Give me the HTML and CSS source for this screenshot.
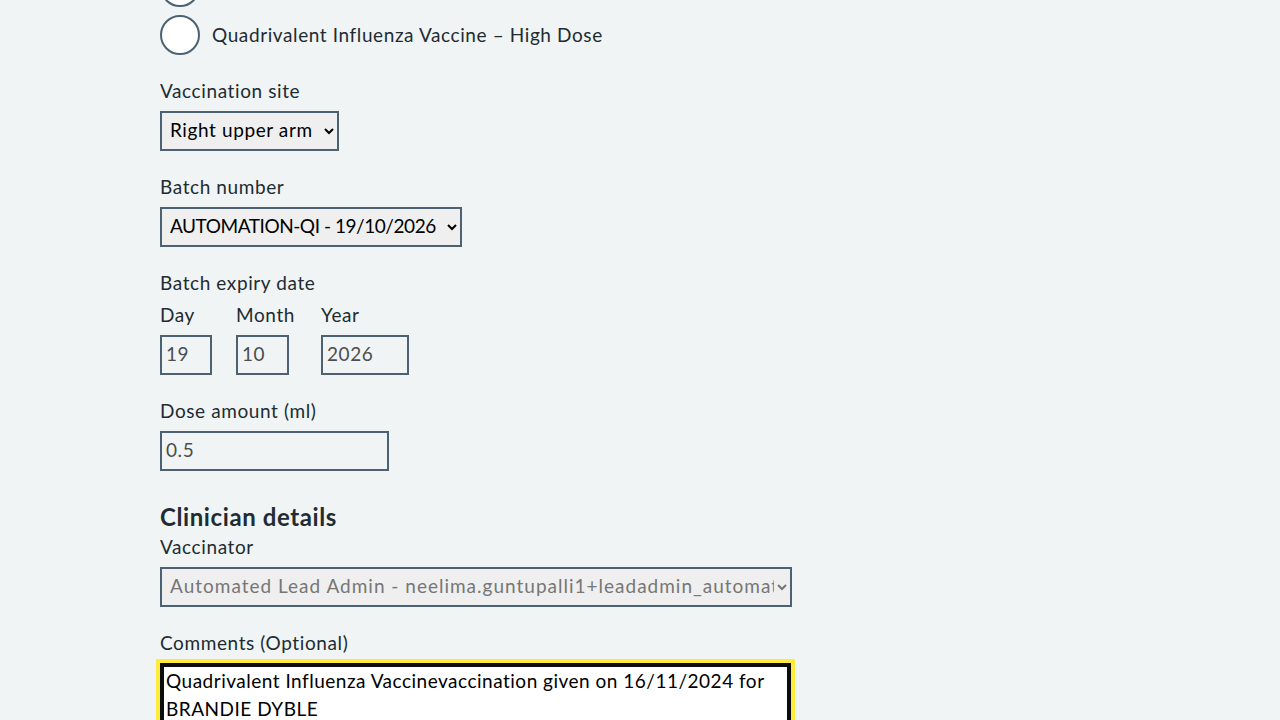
FILE: index.html
```html
<!DOCTYPE html>
<html lang="en">
<head>
<meta charset="utf-8">
<title>Record vaccination</title>
<link rel="stylesheet" href="styles.css">
</head>
<body>
<main class="page">
  <form class="form">
    <div class="form-group radios-group">
      <div class="radio">
        <input class="radio-input" type="radio" name="vaccine" id="v1">
        <label class="radio-label" for="v1">Quadrivalent Influenza Vaccine</label>
      </div>
      <div class="radio">
        <input class="radio-input" type="radio" name="vaccine" id="v2">
        <label class="radio-label" for="v2">Quadrivalent Influenza Vaccine – High Dose</label>
      </div>
    </div>

    <div class="form-group">
      <label class="label" for="site">Vaccination site</label>
      <select class="select select-site" id="site">
        <option>Right upper arm</option>
      </select>
    </div>

    <div class="form-group">
      <label class="label" for="batch">Batch number</label>
      <select class="select select-batch" id="batch">
        <option>AUTOMATION-QI - 19/10/2026</option>
      </select>
    </div>

    <fieldset class="form-group fieldset">
      <legend class="label legend">Batch expiry date</legend>
      <div class="date-input">
        <div class="date-item">
          <label class="label" for="day">Day</label>
          <input class="input input-day" id="day" type="text" value="19" readonly>
        </div>
        <div class="date-item">
          <label class="label" for="month">Month</label>
          <input class="input input-month" id="month" type="text" value="10" readonly>
        </div>
        <div class="date-item">
          <label class="label" for="year">Year</label>
          <input class="input input-year" id="year" type="text" value="2026" readonly>
        </div>
      </div>
    </fieldset>

    <div class="form-group">
      <label class="label" for="dose">Dose amount (ml)</label>
      <input class="input input-dose" id="dose" type="text" value="0.5" readonly>
    </div>

    <h2 class="heading">Clinician details</h2>

    <div class="form-group">
      <label class="label" for="vaccinator">Vaccinator</label>
      <select class="select select-wide" id="vaccinator" disabled>
        <option>Automated Lead Admin - neelima.guntupalli1+leadadmin_automation@nhs.net</option>
      </select>
    </div>

    <div class="form-group">
      <label class="label" for="comments">Comments (Optional)</label>
      <textarea class="textarea is-focused" id="comments" rows="5">Quadrivalent Influenza Vaccinevaccination given on 16/11/2024 for BRANDIE DYBLE</textarea>
    </div>
  </form>
</main>
</body>
</html>
```

FILE: styles.css
```css
html, body {
  margin: 0;
  padding: 0;
  background: #f0f4f5;
}

body {
  font-family: Lato, "Liberation Sans", Arial, sans-serif;
  font-size: 19px;
  line-height: 28px;
  letter-spacing: 0.6px;
  color: #212b32;
}

.page {
  padding: 0 160px;
}

.form {
  width: 632px;
  margin-top: -33px;
}

.form-group {
  margin: 0 0 24px 0;
}

.fieldset {
  border: 0;
  padding: 0;
  min-width: 0;
}

.label {
  display: block;
  margin: 0 0 4px 0;
  padding-bottom: 4px;
  font-size: 19px;
  line-height: 24px;
  color: #212b32;
}

.legend {
  padding: 0 0 4px 0;
}

/* Radios */
.radio {
  display: flex;
  align-items: center;
  gap: 12px;
  min-height: 40px;
  margin-bottom: 8px;
}

.radio:last-child {
  margin-bottom: 0;
}

.radio-input {
  appearance: none;
  -webkit-appearance: none;
  margin: 0;
  width: 40px;
  height: 40px;
  box-sizing: border-box;
  border: 2px solid #4c6272;
  border-radius: 50%;
  background: #ffffff;
  flex: none;
}

.radio-label {
  line-height: 28px;
}

/* Selects */
.select {
  display: block;
  box-sizing: border-box;
  height: 40px;
  padding: 0 0 4px 4px;
  border: 2px solid #4c6272;
  border-radius: 0;
  background-color: #efefef;
  font-family: inherit;
  font-size: 19px;
  letter-spacing: 0.6px;
  color: #000000;
  opacity: 1;
}

.select-site { width: 179px; }
.select-batch {
  width: 302px;
  letter-spacing: -0.45px;
}
.select-wide {
  width: 632px;
  letter-spacing: 1px;
  color: #767676;
}

/* Inputs */
.input {
  display: block;
  box-sizing: border-box;
  height: 40px;
  padding: 0 4px 4px 4px;
  border: 2px solid #4c6272;
  border-radius: 0;
  background: #f0f4f5;
  font-family: inherit;
  font-size: 19px;
  letter-spacing: 0.6px;
  color: #4d4d4d;
  outline: none;
}

.input-day { width: 52px; }
.input-month { width: 53px; }
.input-year { width: 88px; }
.input-dose { width: 229px; }

.date-input {
  display: flex;
  gap: 24px;
  align-items: flex-start;
}

.date-item {
  display: flex;
  flex-direction: column;
}

.date-item:nth-child(2) {
  min-width: 61px;
}

/* Heading */
.heading {
  margin: 0 0 2px 0;
  padding-top: 6px;
  font-size: 24px;
  line-height: 32px;
  font-weight: 700;
  letter-spacing: 0.6px;
  color: #212b32;
}

/* Textarea */
.textarea {
  display: block;
  box-sizing: border-box;
  width: 631px;
  padding: 2px 4px 0 4px;
  border: 2px solid #0b0c0c;
  border-radius: 0;
  background: #ffffff;
  font-family: inherit;
  font-size: 19px;
  line-height: 28px;
  letter-spacing: 0.5px;
  color: #000000;
  resize: vertical;
}

.is-focused {
  outline: 4px solid #ffeb3b;
  outline-offset: 0;
  box-shadow: inset 0 0 0 2px #0b0c0c;
}
```
